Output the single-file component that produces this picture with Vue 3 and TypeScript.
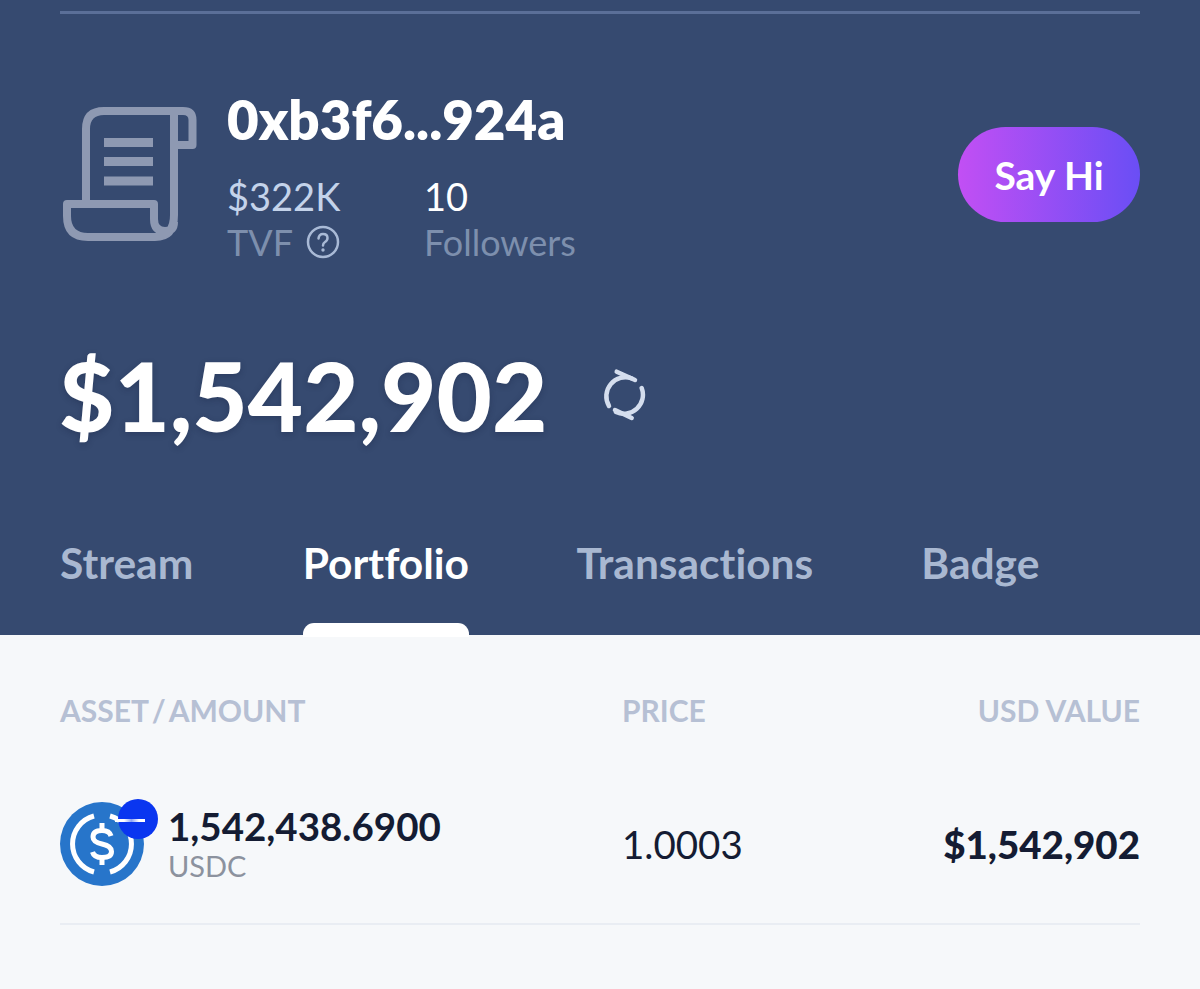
<script setup lang="ts">
const tabs: { label: string; active?: boolean }[] = [
  { label: 'Stream' },
  { label: 'Portfolio', active: true },
  { label: 'Transactions' },
  { label: 'Badge' },
]
</script>

<template>
  <div class="page">
    <section class="hero">
      <div class="rule"></div>
      <div class="profile">
        <div class="who">
          <svg class="scroll" width="140" height="140" viewBox="0 0 140 140" fill="none" stroke="#8e99b2" stroke-width="8" stroke-linejoin="round">
            <path d="M26 100V25Q26 7 44 7H123Q132.500 7 132.500 16V41H114" />
            <path d="M114 7V111Q114 133 95 133H28Q7 133 7 112V100H94V115Q94 127 105 127Q114 127 114 118" />
            <path d="M44 38.500H93M44 57.500H93M44 77H93" stroke-width="9" />
          </svg>
          <div class="info">
            <div class="addr">0xb3f6...924a</div>
            <div class="stats">
              <div class="stat tvf">
                <div class="num">$322K</div>
                <div class="lbl">TVF
                  <svg class="help" width="34" height="34" viewBox="0 0 34 34" fill="none">
                    <circle cx="17" cy="17" r="15" stroke="#a9bad6" stroke-width="2.500" />
                    <path d="M12.500 13.500Q13 9 17 9Q21.500 9 21.500 13Q21.500 15.500 19 17Q17 18.300 17 20.500" stroke="#a9bad6" stroke-width="2.500" stroke-linecap="round" />
                    <circle cx="17" cy="25" r="1.700" fill="#a9bad6" />
                  </svg>
                </div>
              </div>
              <div class="stat">
                <div class="num white">10</div>
                <div class="lbl">Followers</div>
              </div>
            </div>
          </div>
        </div>
        <button class="hi">Say Hi</button>
      </div>
      <div class="total">
        <span class="amount">$1,542,902</span>
        <svg class="sync" width="44" height="54" viewBox="0 0 44 54" fill="none" stroke="#d5deee" stroke-width="4.500" stroke-linecap="round">
          <path d="M30 10.500A19 19 0 0 0 7 38" />
          <path d="M39.700 20A19 19 0 0 1 14 44" />
          <path d="M14.700 3.700L33 12M13 42L29.700 50" />
        </svg>
      </div>
      <nav class="tabs">
        <div v-for="t in tabs" :key="t.label" class="tab" :class="{ active: t.active }">{{ t.label }}</div>
      </nav>
    </section>
    <section class="table">
      <div class="head">
        <div class="c1 hc1">ASSET / AMOUNT</div>
        <div class="c2">PRICE</div>
        <div class="c3">USD VALUE</div>
      </div>
      <div class="row">
        <div class="c1 asset">
          <div class="coin">
            <svg width="84" height="84" viewBox="0 0 84 84">
              <circle cx="42" cy="42" r="42" fill="#2775ca" />
              <path d="M34 14A29 29 0 0 0 34 70M50 14A29 29 0 0 1 50 70" fill="none" stroke="#fff" stroke-width="5" />
              <path d="M51 34Q49.500 28.500 42 28.500Q33 28.500 33 35Q33 40 42 42Q51.500 44 51.500 49.500Q51.500 55.500 42 55.500Q34 55.500 32.500 50" fill="none" stroke="#fff" stroke-width="5" />
              <path d="M42 21V29M42 55V63" stroke="#fff" stroke-width="5" />
            </svg>
            <div class="badge"><span class="dash"></span></div>
          </div>
          <div class="qty">
            <div class="q">1,542,438.6900</div>
            <div class="sym">USDC</div>
          </div>
        </div>
        <div class="c2 price">1.0003</div>
        <div class="c3 value">$1,542,902</div>
      </div>
      <div class="divider"></div>
    </section>
  </div>
</template>

<style>
html, body { margin: 0; background: #f6f8fa; }
</style>

<style scoped>
.page { width: 1200px; height: 989px; overflow: hidden; font-family: Lato, "Liberation Sans", sans-serif; background: #f6f8fa; font-variant-ligatures: none; }
.hero { height: 635px; box-sizing: border-box; background: #364a70; padding: 11px 60px 0; display: flex; flex-direction: column; }
.rule { height: 3px; background: #5b6f98; }
.profile { display: flex; justify-content: space-between; margin-top: 79px; height: 170px; }
.who { display: flex; }
.scroll { margin-top: 11px; display: block; }
.info { margin-left: 27px; }
.addr { font-size: 54.600px; line-height: 60px; font-weight: 800; color: #fff; margin-top: -4px; }
.stats { display: flex; margin-top: 24px; }
.stat { font-size: 36px; line-height: 46px; font-weight: 400; }
.tvf { width: 197px; }
.num { color: #c4d3ea; font-size: 38px; }
.white { color: #fff; }
.lbl { color: #7d8fad; display: flex; align-items: center; gap: 13px; }
.help { display: block; }
.hi { margin-top: 34px; width: 182px; height: 95px; border: 0; border-radius: 48px; background: linear-gradient(90deg, #c24ff4, #6a4ef5); color: #fff; font: 700 39px Lato, sans-serif; padding: 0; }
.total { display: flex; align-items: center; margin-top: 77px; height: 110px; }
.amount { font-size: 95.500px; font-weight: 900; color: #fff; line-height: 110px; margin-left: -1px; text-shadow: 0 2px 6px rgba(20,30,60,.3); }
.sync { margin-left: 55px; }
.tabs { display: flex; margin-top: 81px; height: 93px; }
.tab { font-size: 42.500px; line-height: 48px; font-weight: 700; color: #a9b8d1; padding-top: 8px; position: relative; margin-right: 108px; }
.tab:first-child { margin-right: 109.500px; }
.tab:nth-child(2) { margin-right: 107.500px; }
.active { color: #fff; }
.active::after { content: ""; position: absolute; left: 0; right: 0; top: 92px; height: 14px; background: #fff; border-radius: 11px 11px 0 0; }
.table { padding: 0 60px; }
.head { display: flex; height: 120px; align-items: center; font-size: 30px; font-weight: 700; color: #b6c0d4; padding-top: 30px; box-sizing: border-box; }
.c1 { width: 562px; }
.hc1 { word-spacing: -3.500px; }
.c2 { flex: 1; }
.c3 { text-align: right; }
.row { display: flex; align-items: center; height: 170px; padding-top: 8px; box-sizing: border-box; color: #141c33; }
.asset { display: flex; align-items: center; height: 84px; }
.coin { position: relative; width: 84px; height: 84px; }
.coin svg { display: block; }
.badge { position: absolute; left: 58px; top: -3px; width: 40px; height: 40px; border-radius: 50%; background: #0a36f0; display: flex; align-items: center; justify-content: center; }
.dash { width: 30px; height: 3px; background: linear-gradient(90deg, #fff 0 30%, #8da3f5 55%, #fff 80%); margin-left: -16px; margin-top: 2px; flex: none; }
.qty { margin-left: 24px; margin-top: -1px; }
.q { font-size: 38.500px; line-height: 44px; font-weight: 700; }
.sym { font-size: 29px; line-height: 36px; color: #8c929e; }
.price { font-size: 38.500px; font-weight: 400; }
.value { font-size: 38.500px; font-weight: 900; }
.divider { height: 2px; background: #e9edf3; margin-top: -2px; }
</style>
